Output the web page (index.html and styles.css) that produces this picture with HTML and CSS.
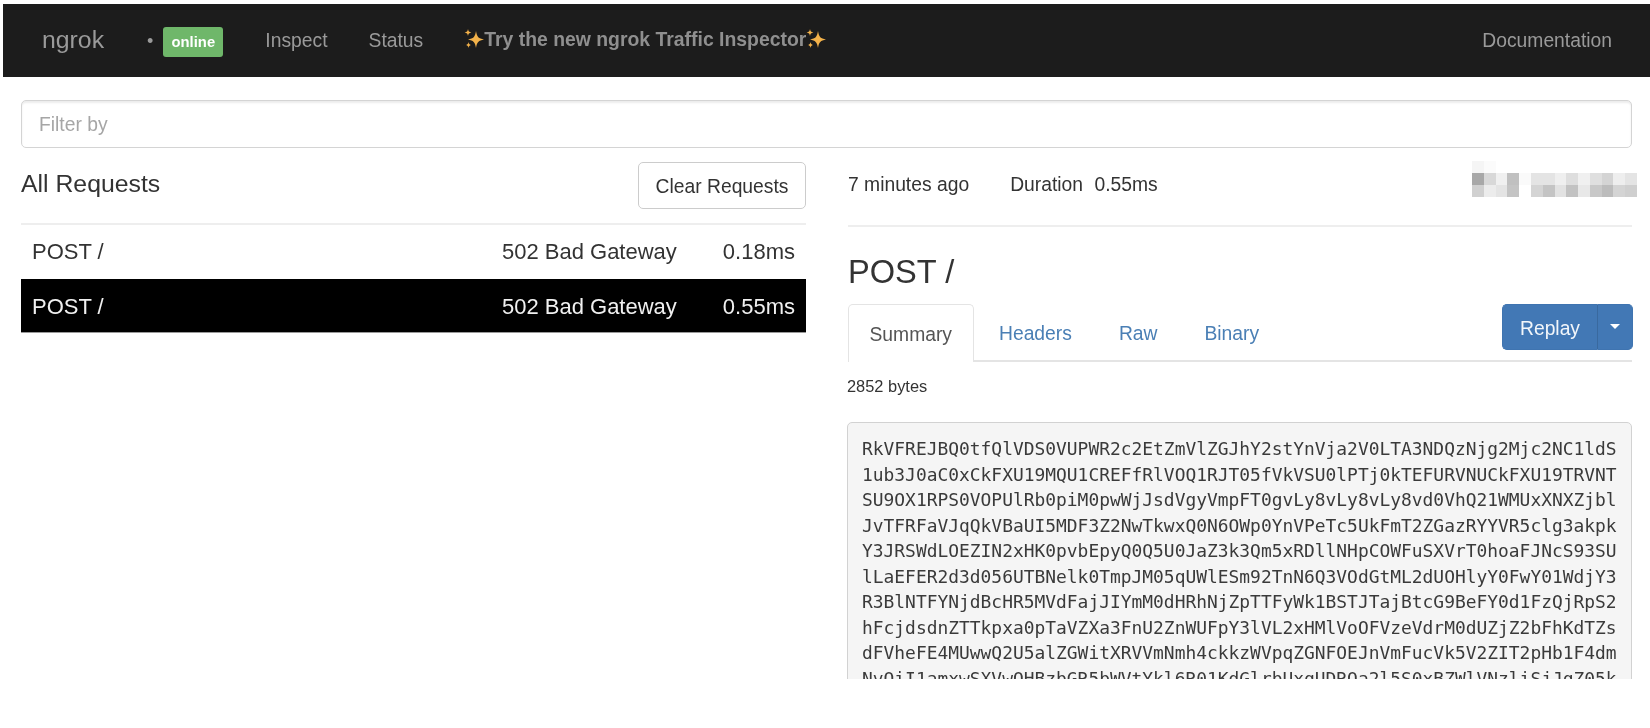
FILE: index.html
```html
<!DOCTYPE html>
<html lang="en">
<head>
<meta charset="utf-8">
<title>ngrok - Inspect</title>
<link rel="stylesheet" href="styles.css">
</head>
<body>
<svg class="defs" width="0" height="0" aria-hidden="true">
  <symbol id="sparkle" viewBox="0 0 20 20">
    <path fill="#f3b24a" d="M12 2 C13 8 14.5 9.5 20 10.5 C14.5 11.5 13 13 12 19 C11 13 9.5 11.5 4 10.5 C9.5 9.5 11 8 12 2Z"/>
    <path fill="#f3b24a" d="M4 0 C4.4 2.4 5 3 7.4 3.5 C5 4 4.4 4.6 4 7 C3.6 4.6 3 4 .6 3.5 C3 3 3.6 2.4 4 0Z"/>
    <path fill="#f3b24a" d="M4.5 13 C4.8 15 5.4 15.6 7.4 16 C5.4 16.4 4.8 17 4.5 19 C4.2 17 3.6 16.4 1.6 16 C3.6 15.6 4.2 15 4.5 13Z"/>
  </symbol>
</svg>
<div class="page">
  <header class="navbar">
    <a class="brand">ngrok</a>
    <span class="dot">•</span>
    <span class="badge">online</span>
    <nav class="nav-links">
      <a class="nav-link">Inspect</a>
      <a class="nav-link">Status</a>
      <a class="nav-link nav-promo"><svg class="sparkle"><use href="#sparkle"/></svg>Try the new ngrok Traffic Inspector<svg class="sparkle"><use href="#sparkle"/></svg></a>
    </nav>
    <a class="nav-link nav-doc">Documentation</a>
  </header>
  <main class="content">
    <input class="filter" type="text" placeholder="Filter by">
    <div class="columns">
      <section class="col-left">
        <div class="list-head">
          <h4 class="list-title">All Requests</h4>
          <button class="btn-clear">Clear Requests</button>
        </div>
        <div class="req-row">
          <span class="req-path">POST /</span>
          <span class="req-status">502 Bad Gateway</span>
          <span class="req-time">0.18ms</span>
        </div>
        <div class="req-row is-selected">
          <span class="req-path">POST /</span>
          <span class="req-status">502 Bad Gateway</span>
          <span class="req-time">0.55ms</span>
        </div>
      </section>
      <section class="col-right">
        <div class="detail-head">
          <span class="ago">7 minutes ago</span>
          <span class="duration">Duration</span>
          <span class="duration-val">0.55ms</span>
          <svg class="mosaic" width="165" height="36" viewBox="0 0 14 3" preserveAspectRatio="none" aria-hidden="true" shape-rendering="crispEdges">
            <rect x="0" y="0" width="1" height="1" fill="#f5f5f5"/><rect x="1" y="0" width="1" height="1" fill="#fbfbfb"/>
            <rect x="0" y="1" width="1" height="1" fill="#a8a8a8"/><rect x="1" y="1" width="1" height="1" fill="#d8d8d8"/><rect x="2" y="1" width="1" height="1" fill="#f0f0f0"/><rect x="3" y="1" width="1" height="1" fill="#c0c0c0"/><rect x="4" y="1" width="1" height="1" fill="#fafafa"/><rect x="5" y="1" width="1" height="1" fill="#e4e4e4"/><rect x="6" y="1" width="1" height="1" fill="#e4e4e4"/><rect x="7" y="1" width="1" height="1" fill="#efefef"/><rect x="8" y="1" width="1" height="1" fill="#dedede"/><rect x="9" y="1" width="1" height="1" fill="#f0f0f0"/><rect x="10" y="1" width="1" height="1" fill="#dfdfdf"/><rect x="11" y="1" width="1" height="1" fill="#d4d4d4"/><rect x="12" y="1" width="1" height="1" fill="#eeeeee"/><rect x="13" y="1" width="1" height="1" fill="#e4e4e4"/>
            <rect x="0" y="2" width="1" height="1" fill="#d0d0d0"/><rect x="1" y="2" width="1" height="1" fill="#ececec"/><rect x="2" y="2" width="1" height="1" fill="#e4e4e4"/><rect x="3" y="2" width="1" height="1" fill="#c4c4c4"/><rect x="5" y="2" width="1" height="1" fill="#d4d4d4"/><rect x="6" y="2" width="1" height="1" fill="#c4c4c4"/><rect x="7" y="2" width="1" height="1" fill="#e2e2e2"/><rect x="8" y="2" width="1" height="1" fill="#c2c2c2"/><rect x="9" y="2" width="1" height="1" fill="#e8e8e8"/><rect x="10" y="2" width="1" height="1" fill="#c8c8c8"/><rect x="11" y="2" width="1" height="1" fill="#bcbcbc"/><rect x="12" y="2" width="1" height="1" fill="#d4d4d4"/><rect x="13" y="2" width="1" height="1" fill="#cfcfcf"/>
          </svg>
        </div>
        <h3 class="detail-title">POST /</h3>
        <div class="tabs-bar">
          <ul class="tabs">
            <li class="tab is-active">Summary</li>
            <li class="tab">Headers</li>
            <li class="tab">Raw</li>
            <li class="tab">Binary</li>
          </ul>
          <div class="btn-group">
            <button class="btn-replay">Replay</button>
            <button class="btn-caret" aria-label="More"><span class="caret"></span></button>
          </div>
        </div>
        <p class="bytes">2852 bytes</p>
        <pre class="payload">RkVFREJBQ0tfQlVDS0VUPWR2c2EtZmVlZGJhY2stYnVja2V0LTA3NDQzNjg2Mjc2NC1ldS
1ub3J0aC0xCkFXU19MQU1CREFfRlVOQ1RJT05fVkVSU0lPTj0kTEFURVNUCkFXU19TRVNT
SU9OX1RPS0VOPUlRb0piM0pwWjJsdVgyVmpFT0gvLy8vLy8vLy8vd0VhQ21WMUxXNXZjbl
JvTFRFaVJqQkVBaUI5MDF3Z2NwTkwxQ0N6OWp0YnVPeTc5UkFmT2ZGazRYYVR5clg3akpk
Y3JRSWdLOEZIN2xHK0pvbEpyQ0Q5U0JaZ3k3Qm5xRDllNHpCOWFuSXVrT0hoaFJNcS93SU
lLaEFER2d3d056UTBNelk0TmpJM05qUWlESm92TnN6Q3VOdGtML2dUOHlyY0FwY01WdjY3
R3BlNTFYNjdBcHR5MVdFajJIYmM0dHRhNjZpTTFyWk1BSTJTajBtcG9BeFY0d1FzQjRpS2
hFcjdsdnZTTkpxa0pTaVZXa3FnU2ZnWUFpY3lVL2xHMlVoOFVzeVdrM0dUZjZ2bFhKdTZs
dFVheFE4MUwwQ2U5alZGWitXRVVmNmh4ckkzWVpqZGNFOEJnVmFucVk5V2ZIT2pHb1F4dm
NvOiI1amxwSXVwOHBzbGR5bWVtYkl6R01KdGlrbUxqUDRQa2l5S0xBZWlVNzliSjJqZ05k
</pre>
      </section>
    </div>
  </main>
</div>
</body>
</html>
```
FILE: styles.css
```css
* { box-sizing: border-box; }
html, body { margin: 0; background: #fff; }
body { font-family: "Liberation Sans", Arial, sans-serif; color: #333; }
.defs { position: absolute; }

.page {
  height: 679px;
  overflow: hidden;
  padding-top: 4px;
  filter: blur(0.6px);
}

/* navbar */
.navbar {
  display: flex;
  align-items: center;
  height: 73px;
  margin-left: 3px;
  padding: 0 38px 0 39px;
  background: #1c1c1c;
  color: #9a9a9a;
  font-size: 19.3px;
}
.brand { font-size: 24.8px; margin-right: 43px; line-height: 1; margin-top: -1px; }
.dot { font-size: 18px; margin-right: 10px; margin-top: 2px; }
.badge {
  display: flex;
  align-items: center;
  justify-content: center;
  width: 60px;
  height: 30px;
  margin-top: 2px;
  background: #6fb76a;
  border-radius: 3px;
  color: #fff;
  font-size: 14.8px;
  font-weight: bold;
}
.nav-links { display: flex; align-items: center; margin-left: 42px; gap: 41px; }
.nav-promo {
  display: flex;
  align-items: center;
  margin-top: -3px;
  font-size: 19.4px;
  font-weight: bold;
  color: #8f8f8f;
}
.sparkle { width: 20px; height: 20px; flex: none; }
.nav-doc { margin-left: auto; }

/* content */
.content { padding: 23px 18px 0 21px; }
.filter {
  display: block;
  width: 100%;
  height: 48px;
  padding: 2px 17px 0;
  border: 1px solid #d4d4d4;
  border-radius: 5px;
  box-shadow: inset 0 2px 2px rgba(0, 0, 0, .08);
  font: 19.3px "Liberation Sans", Arial, sans-serif;
  outline: none;
}
.filter::placeholder { color: #a6a6a6; opacity: 1; }

.columns { display: flex; gap: 42px; margin-top: 14px; }
.col-left { flex: 0 0 785px; }
.col-right { flex: 1; min-width: 0; }

.list-head {
  display: flex;
  align-items: flex-start;
  justify-content: space-between;
  height: 63px;
  border-bottom: 2px solid #eee;
}
.list-title { margin: 7px 0 0; font-size: 24.8px; font-weight: 400; line-height: 30px; }
.btn-clear {
  width: 168px;
  height: 47px;
  padding: 2px 0 0;
  background: #fff;
  border: 1px solid #ccc;
  border-radius: 5px;
  color: #333;
  font: 19.3px "Liberation Sans", Arial, sans-serif;
}

.req-row {
  display: flex;
  align-items: center;
  height: 53px;
  padding: 0 11px 0 11px;
  font-size: 22px;
}
.req-row.is-selected {
  height: 54px;
  margin-top: 1px;
  padding-top: 2px;
  background: #000;
  color: #f0f0f0;
  border-bottom: 1px solid #999;
}
.req-path { flex: 1; }
.req-time { margin-left: 46px; }

.detail-head {
  display: flex;
  align-items: center;
  height: 65px;
  padding-bottom: 17px;
  border-bottom: 2px solid #eee;
  font-size: 19.3px;
}
.ago { margin-right: 41px; }
.duration { margin-right: 11.5px; }
.mosaic { margin-left: auto; margin-top: -13px; margin-right: -5px; }

.detail-title {
  margin: 25px 0 12px;
  font-size: 32.6px;
  font-weight: 400;
  line-height: 40px;
}

.tabs-bar {
  display: flex;
  justify-content: space-between;
  align-items: flex-start;
  height: 58px;
  border-bottom: 2px solid #e4e4e4;
}
.tabs { display: flex; margin: 0; padding: 0; list-style: none; }
.tab {
  height: 58px;
  padding: 0 23px 0 24px;
  color: #4a7fb5;
  font-size: 19.3px;
  line-height: 60px;
}
.tab + .tab { padding: 0 23.5px; }
.tab.is-active {
  padding: 0 20.5px;
  background: #fff;
  color: #555;
  border: 1px solid #e4e4e4;
  border-bottom: 0;
  border-radius: 5px 5px 0 0;
  margin-right: 2px;
}

.btn-group { display: flex; height: 46px; margin-right: -1px; }
.btn-replay, .btn-caret {
  height: 46px;
  background: #4278b5;
  border: 1px solid #3f74b0;
  color: #f2f6fa;
  font: 19.3px "Liberation Sans", Arial, sans-serif;
}
.btn-replay { width: 96px; padding: 4px 0 0; border-radius: 5px 0 0 5px; border-right-color: #39699f; }
.btn-caret { width: 35px; padding: 0; border-left: 0; border-radius: 0 5px 5px 0; }
.caret {
  display: block;
  width: 0;
  height: 0;
  margin: 0 auto 2px;
  border-top: 5px solid #fff;
  border-left: 5px solid transparent;
  border-right: 5px solid transparent;
}

.bytes { margin: 12px 0 24px -1px; font-size: 16.4px; line-height: 24px; }

.payload {
  margin: 0 0 0 -1px;
  height: 400px;
  padding: 13px 14px;
  background: #f5f5f5;
  border: 1px solid #d2d2d2;
  border-radius: 5px;
  color: #3a3a3a;
  font: 17.92px/25.5px "DejaVu Sans Mono", monospace;
  overflow: hidden;
}
```
